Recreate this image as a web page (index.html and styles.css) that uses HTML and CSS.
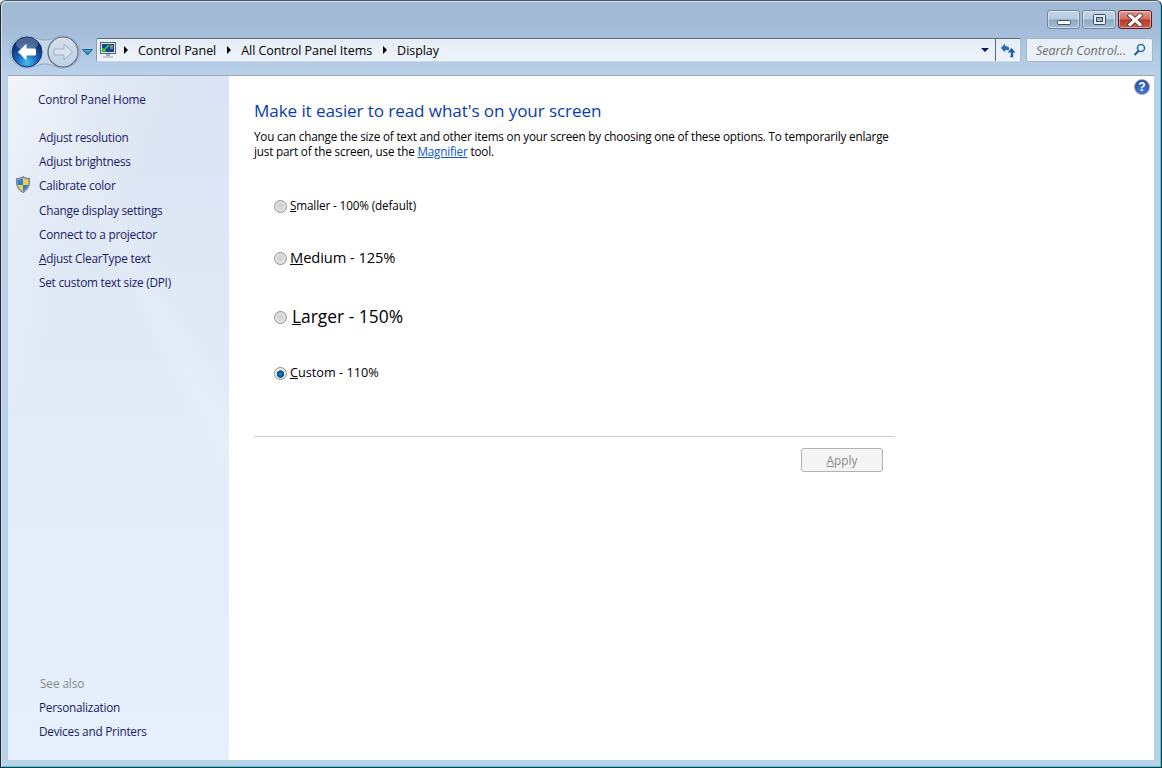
FILE: index.html
```html
<!DOCTYPE html>
<html lang="en">
<head>
<meta charset="utf-8">
<title>Display</title>
<link rel="stylesheet" href="styles.css">
</head>
<body>
<div class="window">
  <header class="chrome">
    <div class="caption">
      <div class="capbtn min"><svg width="14" height="6" viewBox="0 0 14 6"><rect x=".5" y=".5" width="13" height="4" rx="1" fill="#fff" stroke="#3c4f66"/></svg></div>
      <div class="capbtn"><svg width="13" height="11" viewBox="0 0 13 11"><rect x=".5" y=".5" width="12" height="10" rx="1" fill="#e6edf5" stroke="#3c4f66"/><rect x="3.500" y="3.500" width="6" height="4" fill="#9db2c8" stroke="#3c4f66"/></svg></div>
      <div class="capbtn close"><svg width="16" height="14" viewBox="0 0 16 14"><path d="M3 2.500l10 9M13 2.500l-10 9" stroke="#5a2a28" stroke-width="4.800" stroke-linecap="square"/><path d="M3 2.500l10 9M13 2.500l-10 9" stroke="#fff" stroke-width="3.200" stroke-linecap="square"/></svg></div>
    </div>
    <div class="navrow">
      <svg class="navicons" width="85" height="36" viewBox="0 0 85 36">
        <defs>
          <radialGradient id="backg" cx="50%" cy="85%" r="70%"><stop offset="0" stop-color="#45c0f0"/><stop offset=".5" stop-color="#1a62b8"/><stop offset="1" stop-color="#0c2f6e"/></radialGradient>
          <linearGradient id="fwdg" x1="0" y1="0" x2="0" y2="1"><stop offset="0" stop-color="#d6e0ec"/><stop offset="1" stop-color="#bcd1e8"/></linearGradient>
          <linearGradient id="ddg" x1="0" y1="0" x2="0" y2="1"><stop offset="0" stop-color="#4fb0e8"/><stop offset="1" stop-color="#1a6fb0"/></linearGradient>
        </defs>
        <path d="M25 4c7 0 10 4 18 4s11-4 18-4c9 0 17 7 17 16s-8 16-17 16c-7 0-10-4-18-4s-11 4-18 4C16 36 8 29 8 20S16 4 25 4z" fill="#c5d6e8" stroke="#8fa7c2"/>
        <circle cx="25" cy="20" r="15" fill="url(#backg)" stroke="#10336b"/>
        <ellipse cx="25" cy="12" rx="11" ry="6.500" fill="#fff" opacity=".25"/>
        <path d="M16.500 20l7.500-7.500v4.500h9.500v6H24v4.500z" fill="#fff" stroke="#fff" stroke-linejoin="round"/>
        <circle cx="61" cy="20" r="15" fill="url(#fwdg)" stroke="#5f6873" stroke-width="1.200"/>
        <path d="M70.500 20L62 12v5H52v6h10v5z" fill="#d9e2ed" stroke="#9fb0c2" stroke-linejoin="round"/>
        <path d="M80.500 17.500h10l-5 5.500z" fill="url(#ddg)" stroke="#14507f" stroke-width=".8" stroke-linejoin="round"/>
      </svg>
      <div class="address">
        <svg class="pcicon" width="16" height="17" viewBox="0 0 16 17"><rect x=".5" y=".5" width="15" height="11" fill="#dfe3e8" stroke="#5b6672"/><rect x="2" y="2" width="12" height="8" fill="#17409b"/><path d="M3 9l6-6M3 6v3h3" stroke="#2fd02f" stroke-width="1.600" fill="none"/><path d="M10 4h3M10 6h3" stroke="#e8d85a"/><rect x="6" y="12" width="4" height="2" fill="#a6aeb6"/><rect x="3" y="14" width="10" height="2" fill="#c3c9cf"/></svg>
        <span class="sep"></span><span class="crumb">Control Panel</span>
        <span class="sep"></span><span class="crumb">All Control Panel Items</span>
        <span class="sep"></span><span class="crumb">Display</span>
        <span class="ddarrow"></span>
        <div class="refresh"><svg width="16" height="15" viewBox="0 0 16 15"><path d="M1 5l4-4.500V3c3 0 4 1 4.500 3L8 7.500C7.500 7 6.500 6.800 5 7v2.500z" fill="#2a6db0"/><path d="M11.500 5l4 4.500h-2.300V15c-.6-.8-1.800-1-3.200-1 .6-1 1-2.500 1-4.500H7.700z" fill="#1f5d9c"/></svg></div>
      </div>
      <div class="search"><span class="searchtext">Search Control...</span><svg width="13" height="14" viewBox="0 0 13 14"><circle cx="8" cy="5" r="3.500" fill="#eef4fb" stroke="#2a6db0" stroke-width="1.600"/><path d="M5.500 8L1.500 12" stroke="#1f5d9c" stroke-width="2.200"/></svg></div>
    </div>
  </header>
  <div class="client">
    <aside class="side">
      <nav class="tasks">
        <a class="home">Control Panel Home</a>
        <a class="task">Adjust resolution</a>
        <a class="task">Adjust brightness</a>
        <a class="task shielded">
          <svg class="shield" width="16" height="17" viewBox="0 0 16 17"><path d="M8 .5c2 1.500 4.500 2 6.500 2 .5 6-1 11.500-6.500 14C2.500 14 1 8.500 1.500 2.500c2 0 4.500-.5 6.500-2z" fill="#9aa6b4" stroke="#6f7b88"/><path d="M8 2.500v6.500H3c-.3-1.800-.3-3.500-.1-5C4.800 3.800 6.500 3.300 8 2.500z" fill="#2a7fd8"/><path d="M8 2.500c1.500.8 3.200 1.300 5.100 1.500.2 1.500.2 3.200-.1 5H8z" fill="#f6cf3b"/><path d="M3 9h5v5.800C5.300 13.500 3.700 11.500 3 9z" fill="#f6cf3b"/><path d="M13 9H8v5.800c2.700-1.300 4.300-3.300 5-5.800z" fill="#2a7fd8"/></svg>
          Calibrate color</a>
        <a class="task">Change display settings</a>
        <a class="task">Connect to a projector</a>
        <a class="task"><u>A</u>djust ClearType text</a>
        <a class="task">Set custom text size (DPI)</a>
      </nav>
      <div class="seealso">
        <div class="seehead">See also</div>
        <a class="task">Personalization</a>
        <a class="task">Devices and Printers</a>
      </div>
    </aside>
    <main class="main">
      <div class="help">?</div>
      <h1 class="title">Make it easier to read what's on your screen</h1>
      <p class="intro">You can change the size of text and other items on your screen by choosing one of these options. To temporarily enlarge just part of the screen, use the <a class="link">Magnifier</a> tool.</p>
      <div class="opts">
        <label class="opt opt-s"><span class="radio"></span><span><u>S</u>maller - 100% (default)</span></label>
        <label class="opt opt-m"><span class="radio"></span><span><u>M</u>edium - 125%</span></label>
        <label class="opt opt-l"><span class="radio"></span><span><u>L</u>arger - 150%</span></label>
        <label class="opt opt-c"><span class="radio on"></span><span><u>C</u>ustom - 110%</span></label>
      </div>
      <div class="footer">
        <button class="apply" disabled><u>A</u>pply</button>
      </div>
    </main>
  </div>
</div>
</body>
</html>
```
FILE: styles.css
```css
* { box-sizing: border-box; }
html, body { margin: 0; height: 100%; overflow: hidden; background: #fff; }
body { font-family: "Open Sans", "Noto Sans", "Liberation Sans", sans-serif; font-size: 12px; color: #000; }

.window {
  width: 1162px; height: 768px;
  display: flex; flex-direction: column;
  background: linear-gradient(180deg, #9fb8d3 0, #a4bcd8 28px, #b9d0ea 70px, #bad1ea 100%);
  border: 1px solid #1f2a33; border-top-color: #4a5662;
  border-radius: 6px 6px 0 0;
  box-shadow: inset 1px 1px 0 #d4e2f0, inset -1px -1px 0 #1fdcec;
}
.chrome { height: 74px; flex: none; display: flex; flex-direction: column; }
.caption { display: flex; justify-content: flex-end; gap: 2px; padding: 9px 9px 0 0; height: 37px; flex: none; }
.capbtn {
  width: 34px; height: 19px; border: 1px solid #6f87a0; border-radius: 3px;
  display: flex; align-items: center; justify-content: center;
  background: linear-gradient(180deg, #c3d5e8 0, #b6cade 48%, #8ea7c1 52%, #a6bdd4 100%);
  box-shadow: inset 0 0 0 1px rgba(255,255,255,.45);
}
.capbtn.min { width: 33px; padding-top: 6px; }
.capbtn.close {
  border-color: #5b1a20;
  background: linear-gradient(180deg, #dc9d92 0, #cf6d5f 48%, #b53a2a 52%, #c9604c 100%);
}
.navrow { display: flex; align-items: center; height: 26px; padding-right: 7px; margin-top: -1px; }
.navicons { flex: none; overflow: visible; margin: -5px 9px -5px 1px; }
.address {
  flex: none; width: 925px; height: 24px;
  display: flex; align-items: center;
  background: linear-gradient(180deg, #e6edf6, #edf3fa);
  border: 1px solid #6f8197; border-color: #59697c #a9bbd0 #c6d7ea #8499ae;
  border-radius: 2px; font-size: 12.500px; color: #000;
  box-shadow: inset 0 0 0 1px rgba(255,255,255,.4);
}
.pcicon { margin: 0 4px 0 3px; flex: none; }
.sep { width: 0; height: 0; border-left: 4px solid #000; border-top: 4px solid transparent; border-bottom: 4px solid transparent; margin: 0 10px 0 4px; flex: none; }
.crumb { margin-right: 7px; white-space: nowrap; letter-spacing: -.05px; }
.ddarrow { margin-left: auto; margin-right: 6px; width: 0; height: 0; border-top: 4px solid #0a1a50; border-left: 4px solid transparent; border-right: 4px solid transparent; }
.refresh { width: 25px; height: 22px; border-left: 1px solid #59697c; display: flex; align-items: center; justify-content: center; flex: none; }
.search {
  flex: none; width: 127px; height: 24px; margin-left: 5px;
  display: flex; align-items: center; justify-content: space-between; padding: 0 6px 0 9px;
  background: #e9f0f8; border: 1px solid #a3b8cf; border-radius: 2px;
  font-style: italic; color: #6d6d6d; font-size: 12.500px; white-space: nowrap;
}
.searchtext { letter-spacing: -.05px; }

.client {
  flex: 1; min-height: 0; display: flex;
  margin: 0 7px 7px 7px; background: #fff;
  border-top: 1px solid #9ba8b6;
  box-shadow: inset 0 1px 0 #e2e8ef;
}
.side {
  width: 221px; flex: none;
  display: flex; flex-direction: column; justify-content: space-between;
  padding: 15px 0 21px 0;
  background:
    linear-gradient(62deg, rgba(255,255,255,0) 62%, rgba(255,255,255,.14) 66%, rgba(255,255,255,0) 72%),
    linear-gradient(118deg, rgba(255,255,255,.65) 0, rgba(255,255,255,.25) 14%, rgba(255,255,255,0) 32%),
    linear-gradient(180deg, #dae4f2 0, #e0e9f6 260px, #e4eefa 480px, #e5f0fc 100%);
}
.tasks, .seealso { display: flex; flex-direction: column; }
.task, .home { color: #1a1a66; line-height: 16px; height: 16px; white-space: nowrap; letter-spacing: -.24px; padding-left: 31px; font-size: 11.800px; }
.home { padding-left: 30px; margin-bottom: 22px; letter-spacing: -.17px; }
.task { margin-bottom: 8.200px; }
.shielded { position: relative; }
.shield { position: absolute; left: 7px; top: -1px; }
.seehead { color: #85898e; padding-left: 32px; height: 16px; line-height: 16px; margin-bottom: 8px; font-size: 11.800px; letter-spacing: -.1px; }
.seealso .task:last-child { margin-bottom: 0; }

.main { flex: 1; position: relative; padding: 24px 0 0 25px; background: #fff; }
.help {
  position: absolute; top: 3px; right: 4px;
  width: 16px; height: 16px; border-radius: 50%;
  background: radial-gradient(circle at 50% 75%, #4f7fd6, #1f3f96);
  border: 1px solid #9aa2b2; color: #fff; font: bold 12px/14px "Liberation Sans", sans-serif; text-align: center;
}
.title { margin: 0; font-size: 17.100px; line-height: 22px; font-weight: 400; color: #0a3cae; white-space: nowrap; letter-spacing: -.1px; }
.intro { margin: 7px 0 0 0; width: 645px; line-height: 15px; font-size: 11.700px; letter-spacing: -.17px; color: #000; }
.link { color: #0c57c9; text-decoration: underline; }
.opts { display: flex; flex-direction: column; padding-left: 20px; width: 641px; }
.opt { display: flex; align-items: center; white-space: nowrap; color: #000; }
.radio {
  width: 13px; height: 13px; border-radius: 50%; flex: none; margin-right: 3px; margin-top: 2px;
  border: 1px solid #8f8f8f;
  background: radial-gradient(circle at 50% 45%, #cfcfcf 0, #dadada 45%, #f6f6f6 100%);
}
.radio.on { background: radial-gradient(circle at 50% 55%, #1a86c8 0, #0a4e86 42%, #f2f2f2 50%, #e2e2e2 100%); }
.opt-s { margin-top: 38px; font-size: 11.700px; letter-spacing: -.12px; line-height: 16px; }
.opt-m { margin-top: 34px; font-size: 14.700px; letter-spacing: -.08px; line-height: 20px; }
.opt-l { margin-top: 37px; font-size: 17.400px; line-height: 24px; }
.opt-l .radio { margin-right: 5px; }
.opt-c { margin-top: 36px; font-size: 12.700px; line-height: 16px; }
.footer { margin-top: 56px; width: 641px; border-top: 1px solid #d0d0d0; padding: 11px 12px 0 0; display: flex; justify-content: flex-end; }
.apply {
  width: 82px; height: 24px; padding: 0;
  font-family: inherit; font-size: 11.800px; color: #8a8a8a;
  background: #f4f4f4; border: 1px solid #adb2b5; border-radius: 3px;
}
```
